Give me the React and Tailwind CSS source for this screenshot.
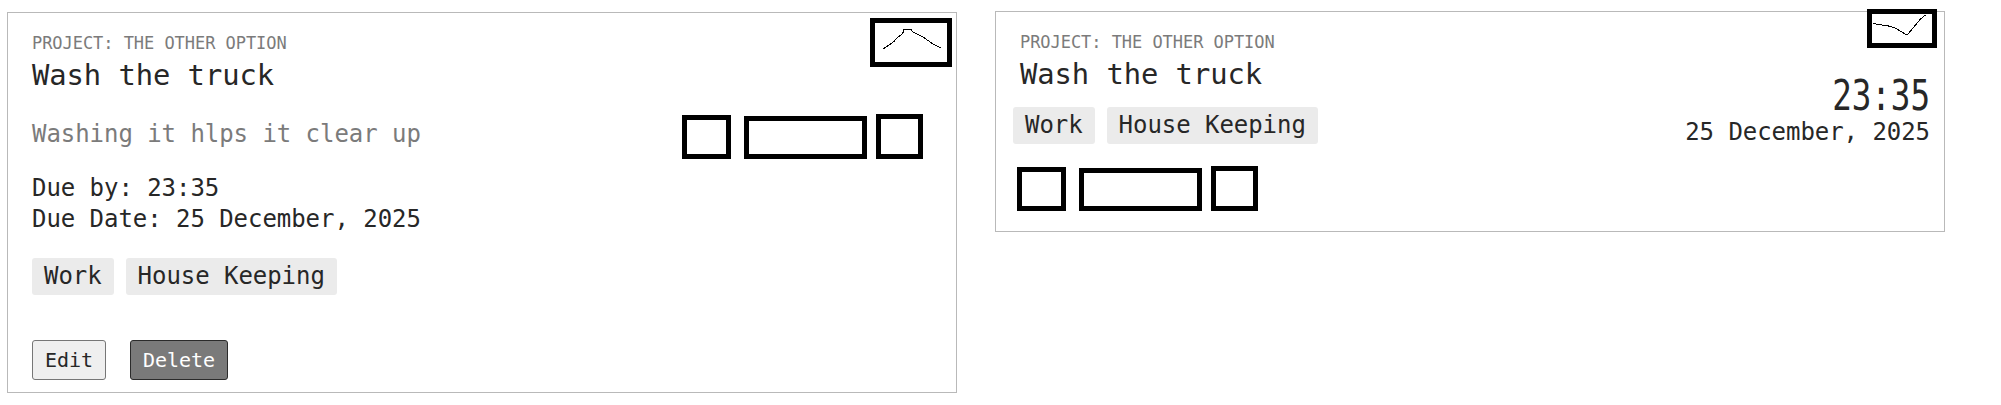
import React from 'react';

const Label = ({ children }) => (
  <div className="text-[17px] leading-5 text-[#7b7b7b] uppercase">{children}</div>
);

const Title = ({ children }) => (
  <h2 className="mt-1 text-[28.8px] leading-9">{children}</h2>
);

const Tags = ({ items }) => (
  <div className="flex gap-3">
    {items.map((t) => (
      <span key={t} className="h-[37px] rounded-[3px] bg-[#ebebeb] px-3 leading-[37px]">{t}</span>
    ))}
  </div>
);

const Slots = () => (
  <div className="flex items-end">
    <div className="h-11 w-[49px] border-5 border-black" />
    <div className="ml-[13px] h-[43px] w-[123px] border-5 border-black" />
    <div className="ml-[9px] h-[45px] w-[47px] border-5 border-black" />
  </div>
);

const Line = ({ points, className }) => (
  <svg className={className} fill="none" stroke="black" strokeWidth="1" shapeRendering="crispEdges">
    <polyline points={points} />
  </svg>
);

const tags = ['Work', 'House Keeping'];

export default function App() {
  return (
    <div className="flex h-[405px] w-[2001px] items-start bg-white pl-[7px] pt-[11px] font-['DejaVu_Sans_Mono',monospace] text-[24px] tracking-[-0.002em] whitespace-nowrap text-[#272727]">
      <section className="relative mt-px h-[381px] w-[950px] border border-[#b9b9b9] pl-6 pr-[33px] pt-5">
        <Label>Project: The other option</Label>
        <Title>Wash the truck</Title>
        <div className="mt-[21px] flex h-[45px] justify-between">
          <p className="pt-1 leading-8 text-[#7b7b7b]">Washing it hlps it clear up</p>
          <Slots />
        </div>
        <div className="mt-[14px] leading-[31px]">
          <p>Due by: 23:35</p>
          <p>Due Date: 25 December, 2025</p>
        </div>
        <div className="mt-[23px]">
          <Tags items={tags} />
        </div>
        <div className="mt-[45px] flex gap-6 text-[20px] leading-[38px]">
          <button className="h-10 w-[74px] rounded-[3px] border border-[#767676] bg-[#efefef]">Edit</button>
          <button className="h-10 w-[98px] rounded-[3px] border border-[#2b2b2b] bg-[#7a7a7a] text-white">Delete</button>
        </div>
        <button className="absolute right-1 top-[5px] h-[49px] w-[82px] border-5 border-black bg-white">
          <Line className="h-[39px] w-[72px]" points="8,26 14,22 19,18.5 22,15 26,12 28,9.5 29,6.5 36,6.5 38,9 48,14 58,21 66,25" />
        </button>
      </section>

      <section className="relative ml-[38px] flex h-[221px] w-[950px] justify-between border border-[#b9b9b9] pl-[17px] pr-[14px] pt-5">
        <div>
          <div className="pl-[7px]">
            <Label>Project: The other option</Label>
            <Title>Wash the truck</Title>
          </div>
          <div className="mt-[15px]">
            <Tags items={tags} />
          </div>
          <div className="mt-[22px] pl-1">
            <Slots />
          </div>
        </div>
        <div className="flex flex-col items-end pt-[52px]">
          <p className="h-8 origin-bottom scale-y-[1.29] text-[32.6px] leading-8">23:35</p>
          <p className="leading-8">25 December, 2025</p>
        </div>
        <button className="absolute right-[7px] top-[-3px] h-[39px] w-[70px] border-5 border-black bg-white">
          <Line className="h-[29px] w-[60px]" points="1,9.5 6.5,10.5 16.5,12 23,14 27.5,16.5 34,20.5 36,20 43.5,11 48,5.5 53.5,1" />
        </button>
      </section>
    </div>
  );
}
